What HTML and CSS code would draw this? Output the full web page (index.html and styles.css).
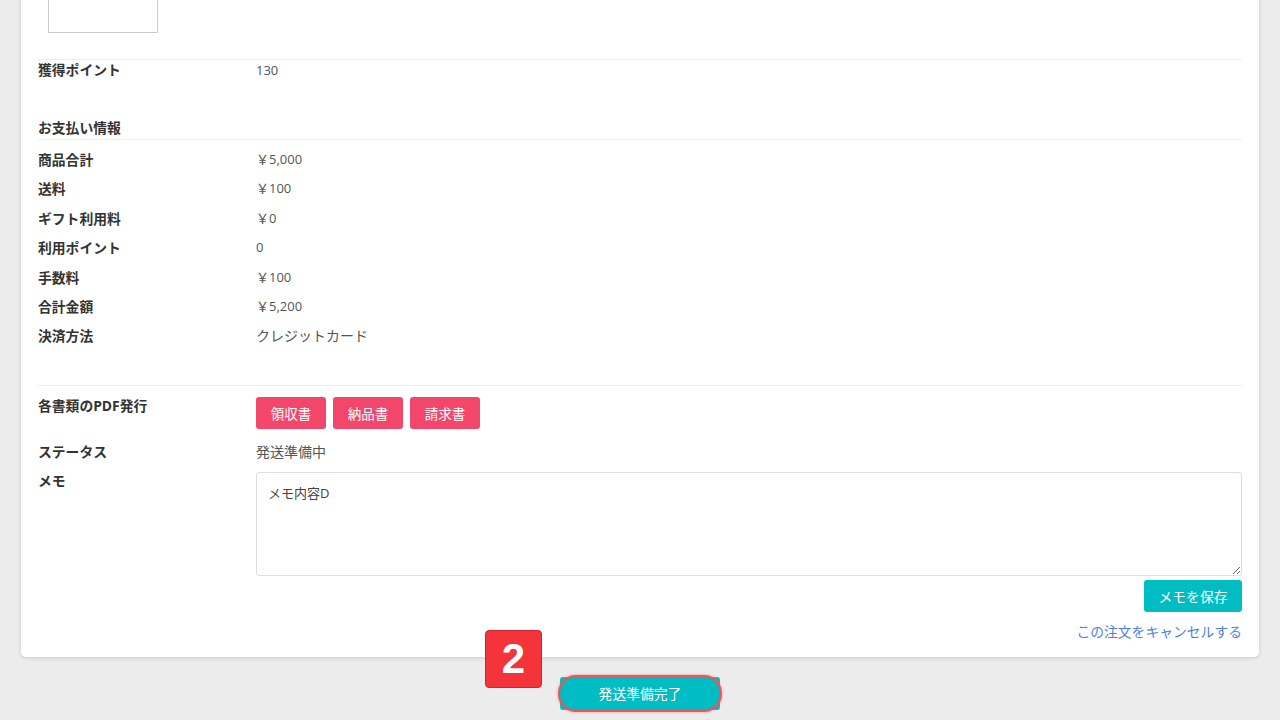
FILE: index.html
```
<html>
<head>
  <meta charset="utf-8">
  <link rel="stylesheet" href="styles.css">
</head>
<body>
  <div class="card">
    <div class="thumb"></div>

    <div class="row first">
      <div class="label">獲得ポイント</div>
      <div class="value">130</div>
    </div>

    <div class="heading">お支払い情報</div>

    <div class="pay">
      <div class="row"><div class="label">商品合計</div><div class="value">￥5,000</div></div>
      <div class="row"><div class="label">送料</div><div class="value">￥100</div></div>
      <div class="row"><div class="label">ギフト利用料</div><div class="value">￥0</div></div>
      <div class="row"><div class="label">利用ポイント</div><div class="value">0</div></div>
      <div class="row"><div class="label">手数料</div><div class="value">￥100</div></div>
      <div class="row"><div class="label">合計金額</div><div class="value">￥5,200</div></div>
      <div class="row"><div class="label">決済方法</div><div class="value big">クレジットカード</div></div>
    </div>

    <div class="docs">
      <div class="row pdf">
        <div class="label">各書類のPDF発行</div>
        <div class="btns">
          <button class="pink">領収書</button>
          <button class="pink">納品書</button>
          <button class="pink">請求書</button>
        </div>
      </div>
      <div class="row status">
        <div class="label">ステータス</div>
        <div class="value big">発送準備中</div>
      </div>
      <div class="row memo">
        <div class="label">メモ</div>
        <div class="memo-box">
          <textarea>メモ内容D</textarea>
          <div class="save"><button class="teal">メモを保存</button></div>
          <div class="cancel"><a href="#">この注文をキャンセルする</a></div>
        </div>
      </div>
    </div>
  </div>

  <div class="footer">
    <div class="done-wrap">
      <span class="badge">2</span>
      <button class="done">発送準備完了</button>
    </div>
  </div>
</body>
</html>
```

FILE: styles.css
```
body {
	margin: 0;
	background: #ececec;
	font-family: "Open Sans", "Noto Sans CJK JP", sans-serif;
	font-size: 13px;
	color: #333;
	height: 720px;
	overflow: hidden;
}

.card {
	background: #fff;
	margin: -69px 21px 0 21px;
	padding: 0 17px 15px 17px;
	border-radius: 0 0 5px 5px;
	box-shadow: 0 1px 4px rgba(0,0,0,0.15);
}

.thumb {
	width: 108px;
	height: 100px;
	margin-left: 10px;
	border: 1px solid #ccc;
	margin-bottom: 26px;
}

.row {
	display: flex;
}

.label {
	width: 218px;
	flex-shrink: 0;
	font-weight: bold;
	font-size: 13.8px;
	color: #333;
}

.value {
	color: #555;
}

.value.big {
	font-size: 14px;
}

.row.first {
	border-top: 1px solid #eee;
	line-height: 20px;
}

.heading {
	margin-top: 38px;
	line-height: 20px;
	padding-bottom: 1px;
	border-bottom: 1px solid #eee;
	font-weight: bold;
	font-size: 13.8px;
}

.pay {
	padding-top: 5px;
}

.pay .row {
	height: 29.4px;
	line-height: 29.4px;
}

.docs {
	margin-top: 34px;
	border-top: 1px solid #eee;
	padding-top: 10px;
}

.pdf .label {
	line-height: 20px;
}

.btns {
	display: flex;
	gap: 7px;
	margin-top: 1px;
}

button {
	font-family: "Noto Sans CJK JP", sans-serif;
	font-size: 13.5px;
	border: none;
	color: #fff;
	border-radius: 3px;
	height: 32px;
	cursor: pointer;
}

.pink {
	background: #f2476b;
	width: 70px;
}

.status {
	margin-top: 13px;
	line-height: 20px;
}

.memo {
	margin-top: 10px;
}

.memo .label {
	line-height: 18px;
}

.memo-box {
	flex: 1;
}

textarea {
	display: block;
	width: 100%;
	height: 104px;
	box-sizing: border-box;
	border: 1px solid #ddd;
	border-radius: 3px;
	padding: 10px 11px;
	font-family: "Open Sans", "Noto Sans CJK JP", sans-serif;
	font-size: 13px;
	color: #444;
	resize: vertical;
}

.save {
	display: flex;
	justify-content: flex-end;
	margin-top: 4px;
}

.teal {
	background: #00bdc4;
	width: 98px;
	font-size: 13.8px;
}

.cancel {
	text-align: right;
	margin-top: 10px;
	line-height: 20px;
	font-size: 13.8px;
}

.cancel a {
	color: #4d7fe3;
	text-decoration: none;
}

.footer {
	display: flex;
	justify-content: center;
	margin-top: 20px;
}

.done-wrap {
	position: relative;
}

.done {
	background: #00bdc4;
	width: 160px;
	height: 33px;
	border-radius: 3px;
	font-size: 13.8px;
}

.done-wrap::after {
	content: "";
	position: absolute;
	left: -2px;
	top: -2px;
	right: -2px;
	bottom: -2px;
	border: 2px solid #e9565a;
	border-radius: 18px;
	box-shadow: 0 0 3px rgba(233,86,90,0.6), inset 0 0 2px rgba(233,86,90,0.5);
	pointer-events: none;
}

.badge {
	position: absolute;
	left: -75px;
	top: -47px;
	width: 55px;
	height: 56px;
	background: #f4343a;
	border: 1px solid #c9272b;
	border-radius: 4px;
	color: #fff;
	font-family: "Liberation Sans", sans-serif;
	font-weight: bold;
	font-size: 42px;
	line-height: 56px;
	text-align: center;
	z-index: 2;
}
```
